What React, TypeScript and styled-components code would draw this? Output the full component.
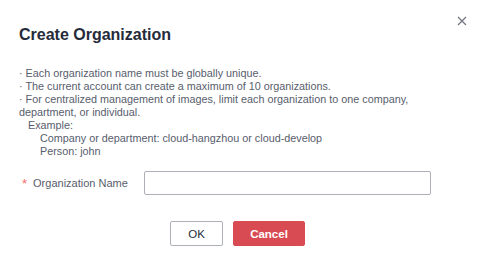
import styled, { createGlobalStyle } from "styled-components";

const GlobalStyle = createGlobalStyle`
  html, body {
    margin: 0;
    padding: 0;
    background: #ffffff;
  }
  body {
    font-family: "Liberation Sans", Arial, sans-serif;
  }
`;

const Dialog = styled.div`
  position: relative;
  width: 480px;
  height: 257px;
  box-sizing: border-box;
  padding: 24px 19px 0 19px;
  background: #ffffff;
`;

const CloseButton = styled.button`
  position: absolute;
  top: 12px;
  right: 10px;
  width: 17px;
  height: 17px;
  padding: 0;
  border: none;
  background: transparent;
  display: flex;
  align-items: center;
  justify-content: center;
  cursor: pointer;
`;

const Title = styled.h2`
  margin: 0;
  font-size: 16px;
  line-height: 22px;
  font-weight: 700;
  color: #252b3a;
`;

const Notice = styled.div`
  margin-top: 21px;
  font-size: 10.8px;
  line-height: 13px;
  color: #575d6c;
  p {
    margin: 0;
  }
`;

const Indent = styled.p<{ $pad: number }>`
  padding-left: ${(p) => p.$pad}px;
`;

const FormRow = styled.div`
  margin-top: 13px;
  display: flex;
  align-items: center;
`;

const Label = styled.label`
  width: 125px;
  display: flex;
  align-items: center;
  font-size: 11px;
  color: #575d6c;
`;

const Required = styled.span`
  color: #f66f6a;
  margin: 0 6px 0 3px;
  font-size: 13px;
`;

const Input = styled.input`
  width: 287px;
  height: 24px;
  box-sizing: border-box;
  border: 1px solid #adb0b8;
  border-radius: 2px;
  padding: 0 8px;
  font-family: inherit;
  font-size: 11px;
  outline: none;
`;

const Footer = styled.div`
  margin-top: 26px;
  display: flex;
  justify-content: center;
  gap: 10px;
  padding-right: 5px;
`;

const Button = styled.button<{ $primary?: boolean }>`
  height: 25px;
  min-width: ${(p) => (p.$primary ? "72px" : "53px")};
  box-sizing: border-box;
  border-radius: 2px;
  font-family: inherit;
  font-size: 11.5px;
  font-weight: ${(p) => (p.$primary ? 700 : 400)};
  border: 1px solid ${(p) => (p.$primary ? "#d94b53" : "#adb0b8")};
  background: ${(p) => (p.$primary ? "#d94b53" : "#ffffff")};
  color: ${(p) => (p.$primary ? "#ffffff" : "#252b3a")};
  cursor: pointer;
`;

export default function App() {
  return (
    <>
      <GlobalStyle />
      <Dialog>
        <CloseButton aria-label="Close">
          <svg width="10" height="10" viewBox="0 0 10 10">
            <path d="M1 1 L9 9 M9 1 L1 9" stroke="#71757f" strokeWidth="1.2" />
          </svg>
        </CloseButton>
        <Title>Create Organization</Title>
        <Notice>
          <p>· Each organization name must be globally unique.</p>
          <p>· The current account can create a maximum of 10 organizations.</p>
          <p>
            · For centralized management of images, limit each organization to one company,
            department, or individual.
          </p>
          <Indent $pad={9}>Example:</Indent>
          <Indent $pad={21}>Company or department: cloud-hangzhou or cloud-develop</Indent>
          <Indent $pad={21}>Person: john</Indent>
        </Notice>
        <FormRow>
          <Label>
            <Required>*</Required>
            Organization Name
          </Label>
          <Input type="text" />
        </FormRow>
        <Footer>
          <Button>OK</Button>
          <Button $primary>Cancel</Button>
        </Footer>
      </Dialog>
    </>
  );
}
